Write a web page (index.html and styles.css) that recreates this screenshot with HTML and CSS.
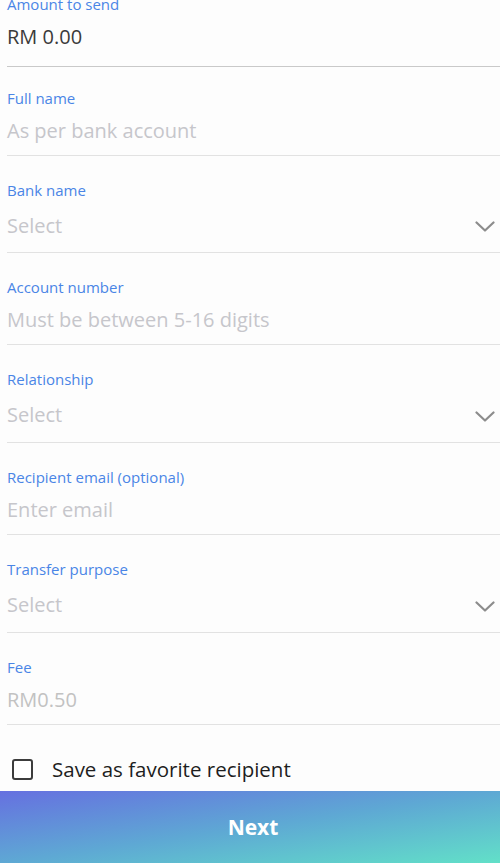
FILE: index.html
```html
<!DOCTYPE html>
<html>
<head>
<meta charset="utf-8">
<link rel="stylesheet" href="styles.css">
</head>
<body>
<div class="page">
  <form class="form">
    <div class="field field-amount">
      <div class="label">Amount to send</div>
      <div class="value value-filled">RM 0.00</div>
    </div>
    <div class="field field-first">
      <div class="label">Full name</div>
      <div class="value">As per bank account</div>
    </div>
    <div class="field field-select field-bank">
      <div class="label">Bank name</div>
      <div class="value">Select
        <svg class="chev" viewBox="0 0 20 11" width="20" height="11"><path d="M1.5 1.5 L10 9.5 L18.5 1.5" fill="none" stroke="#8c8c8c" stroke-width="2.2" stroke-linecap="round" stroke-linejoin="round"/></svg>
      </div>
    </div>
    <div class="field">
      <div class="label">Account number</div>
      <div class="value">Must be between 5-16 digits</div>
    </div>
    <div class="field field-select">
      <div class="label">Relationship</div>
      <div class="value">Select
        <svg class="chev" viewBox="0 0 20 11" width="20" height="11"><path d="M1.5 1.5 L10 9.5 L18.5 1.5" fill="none" stroke="#8c8c8c" stroke-width="2.2" stroke-linecap="round" stroke-linejoin="round"/></svg>
      </div>
    </div>
    <div class="field">
      <div class="label">Recipient email (optional)</div>
      <div class="value">Enter email</div>
    </div>
    <div class="field field-select">
      <div class="label">Transfer purpose</div>
      <div class="value">Select
        <svg class="chev" viewBox="0 0 20 11" width="20" height="11"><path d="M1.5 1.5 L10 9.5 L18.5 1.5" fill="none" stroke="#8c8c8c" stroke-width="2.2" stroke-linecap="round" stroke-linejoin="round"/></svg>
      </div>
    </div>
    <div class="field">
      <div class="label">Fee</div>
      <div class="value value-fee">RM0.50</div>
    </div>
    <label class="check-row">
      <span class="checkbox"></span>
      <span class="check-text">Save as favorite recipient</span>
    </label>
  </form>
  <div class="next-btn">Next</div>
</div>
</body>
</html>
```
FILE: styles.css
```css
html, body {
  margin: 0;
  padding: 0;
  background: #fdfdfd;
}
body {
  font-family: "Open Sans", "Noto Sans", "Liberation Sans", sans-serif;
  width: 500px;
  height: 863px;
  overflow: hidden;
}
.page {
  display: flex;
  flex-direction: column;
  height: 863px;
}
.form {
  flex: 1;
  padding-left: 7px;
  display: flex;
  flex-direction: column;
}
.field {
  padding-top: 24px;
  padding-bottom: 10px;
  border-bottom: 1px solid #e2e2e2;
  display: flex;
  flex-direction: column;
}
.field-first {
  padding-top: 21px;
}
.field-amount {
  margin-top: -6px;
  padding-top: 0;
  padding-bottom: 0;
  height: 73px;
  box-sizing: border-box;
  border-bottom: 1.5px solid #c9c9c9;
}
.label {
  font-size: 15px;
  line-height: 20px;
  color: #4a85e6;
}
.value {
  margin-top: 9px;
  font-size: 20px;
  line-height: 28px;
  height: 28px;
  color: #c6c6cb;
  display: flex;
  align-items: center;
  justify-content: space-between;
}
.value-filled {
  color: #3a3a3a;
}
.value-fee {
  color: #c2c2c2;
}
.field-select .value {
  height: 34px;
}
.field-bank .value {
  height: 33px;
}
.chev {
  margin-right: 5px;
  margin-top: 2px;
}
.check-row {
  display: flex;
  align-items: center;
  padding-left: 5px;
  margin-top: 30px;
}
.checkbox {
  width: 17px;
  height: 17px;
  border: 2px solid #3c3c3c;
  border-radius: 3px;
  background: #fff;
}
.check-text {
  margin-left: 19px;
  font-size: 20.5px;
  color: #1e1e1e;
}
.next-btn {
  height: 72px;
  flex-shrink: 0;
  background: linear-gradient(to bottom right, #6670e0 0%, #5ea8d4 50%, #62e0c8 100%);
  color: #fff;
  font-weight: 700;
  font-size: 21px;
  display: flex;
  align-items: center;
  justify-content: center;
  padding-left: 6px;
}
```
